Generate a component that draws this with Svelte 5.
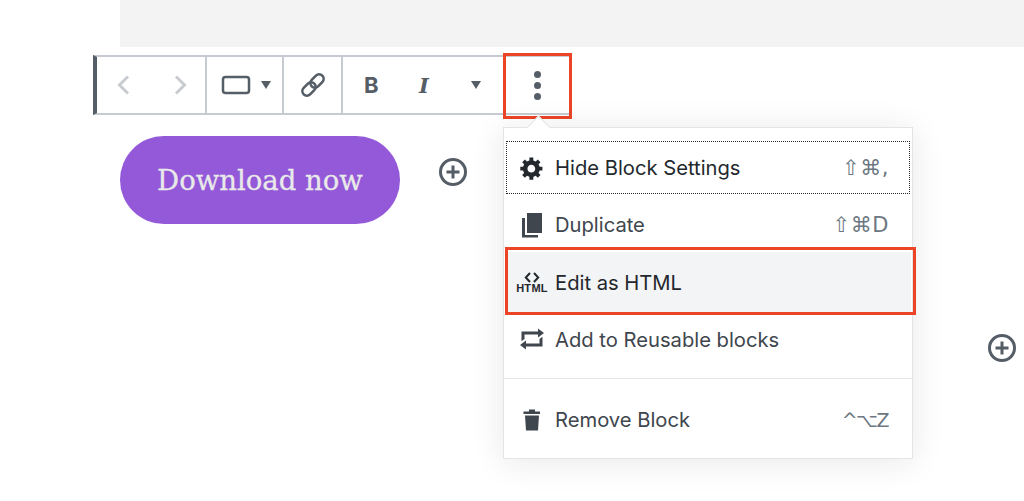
<script>
  const items = [
    { id: 'gear', label: 'Hide Block Settings', keys: '⇧⌘,', cls: 'focus' },
    { id: 'dup', label: 'Duplicate', keys: '⇧⌘D', cls: 'dup' },
    { id: 'html', label: 'Edit as HTML', keys: '', cls: 'active' },
    { id: 'reuse', label: 'Add to Reusable blocks', keys: '', cls: 'reuse' }
  ];
</script>

<div class="page">
  <div class="band"></div>

  <div class="toolbar">
    <div class="group nav">
      <svg width="24" height="24" viewBox="0 0 24 24"><path d="M16 3.500 7.500 12l8.500 8.500" class="off" /></svg>
      <svg width="24" height="24" viewBox="0 0 24 24"><path d="M8 3.500 16.500 12 8 20.500" class="off" /></svg>
    </div>
    <div class="group type">
      <svg width="30" height="22" viewBox="0 0 30 22"><rect x="2" y="3" width="26" height="16" rx="2.500" class="box" /></svg>
      <span class="caret"></span>
    </div>
    <div class="group link">
      <svg width="28" height="28" viewBox="0 0 28 28" class="chain">
        <rect x="2.500" y="13.500" width="15" height="9" rx="4.500" transform="rotate(-45 10 18)" />
        <rect x="10.500" y="5.500" width="15" height="9" rx="4.500" transform="rotate(-45 18 10)" />
      </svg>
    </div>
    <div class="group format">
      <b class="bold">B</b>
      <i class="ital">I</i>
      <span class="caret"></span>
    </div>
    <div class="group more">
      <span class="dots"><i></i><i></i><i></i></span>
    </div>
  </div>

  <div class="row">
    <button class="cta">Download now</button>
    <svg width="30" height="30" viewBox="0 0 30 30" class="plus"><circle cx="15" cy="15" r="12.500" /><path d="M15 8.500v13M8.500 15h13" /></svg>
  </div>

  <svg width="30" height="30" viewBox="0 0 30 30" class="plus plus-far"><circle cx="15" cy="15" r="12.500" /><path d="M15 8.500v13M8.500 15h13" /></svg>

  <div class="redbox red-more"></div>

  <div class="menu">
    <span class="arrow"></span>
    <div class="section">
      {#each items as it}
        <div class="item {it.cls}">
          <span class="ico">
            {#if it.id === 'gear'}
              <svg width="26" height="26" viewBox="0 0 20 20"><path fill="#23282d" d="M18 12h-2.180c-.17.7-.44 1.350-.81 1.930l1.540 1.540-2.100 2.100-1.540-1.540c-.58.360-1.230.640-1.910.810V19H8v-2.180c-.680-.170-1.330-.450-1.910-.810l-1.540 1.540-2.120-2.120 1.540-1.540c-.360-.580-.640-1.230-.810-1.890H1V9h2.180c.170-.700.450-1.330.810-1.910L2.450 5.550l2.100-2.100 1.540 1.540c.580-.370 1.230-.640 1.910-.810V2h3v2.180c.680.170 1.330.440 1.910.810l1.540-1.540 2.120 2.120-1.540 1.540c.360.580.640 1.210.810 1.890H18v3zm-8.500 1.500c1.660 0 3-1.340 3-3s-1.340-3-3-3-3 1.340-3 3 1.340 3 3 3z"/></svg>
            {:else if it.id === 'dup'}
              <svg width="24" height="26" viewBox="0 0 24 26"><path fill="#40464d" d="M7 1h15v20H7z"/><path fill="#40464d" d="M2 6h3v17h13v2.500H2z"/></svg>
            {:else if it.id === 'html'}
              <span class="htmlicon">
                <svg width="16" height="11" viewBox="0 0 16 11"><path d="M6 1 1.800 5.500 6 10M10 1l4.200 4.500L10 10" /></svg>
                <small>HTML</small>
              </span>
            {:else}
              <svg width="30" height="30" viewBox="0 0 20 20"><path fill="#40464d" d="M5 7v3l-2 1.500V5h11V3l4 3.010L14 9V7H5zm10 6v-3l2-1.500V15H6v2l-4-3.010L6 11v2h9z"/></svg>
            {/if}
          </span>
          <span class="label">{it.label}</span>
          {#if it.keys}<span class="keys">{it.keys}</span>{/if}
        </div>
      {/each}
    </div>
    <div class="section last">
      <div class="item plain">
        <span class="ico">
          <svg width="22" height="24" viewBox="0 0 22 24"><path fill="#40464d" d="M8 1.500h6V3.500h5v2.500H2.500V3.500H8zM4 7.500h14l-1 15H5z"/></svg>
        </span>
        <span class="label">Remove Block</span>
        <span class="keys alt">^⌥Z</span>
      </div>
    </div>
    <div class="redbox red-html"></div>
  </div>
</div>

<style>
  :global(body) { margin: 0; background: #fff; }
  .page { position: relative; width: 1024px; height: 501px; overflow: hidden; font-family: Inter, "Liberation Sans", sans-serif; }
  .band { height: 47px; margin-left: 120px; background: #f3f3f4; }

  .toolbar { display: flex; width: 477px; height: 60px; margin: 8px 0 0 93px; box-sizing: border-box; border-left: 4px solid #555d66; border-top: 2px solid #c6cbd1; border-bottom: 2px solid #c6cbd1; background: #fff; }
  .group { display: flex; align-items: center; box-sizing: border-box; border-right: 2px solid #c6cbd1; }
  .nav { width: 110px; padding-left: 15px; gap: 32px; }
  .type { width: 77px; padding-left: 14px; gap: 10px; }
  .link { width: 59px; justify-content: center; }
  .format { width: 161px; padding-left: 21px; border-right: 0; }
  .more { flex: 1; justify-content: center; border-right: 0; }
  .off { fill: none; stroke: #c8ccd0; stroke-width: 3; }
  .box { fill: none; stroke: #555d66; stroke-width: 2.500; }
  .caret { display: block; width: 0; height: 0; border-left: 5px solid transparent; border-right: 5px solid transparent; border-top: 8px solid #555d66; }
  .chain { fill: none; stroke: #555d66; stroke-width: 2.600; }
  .bold { width: 16px; font: 700 22px Inter, sans-serif; color: #555d66; }
  .ital { width: 16px; margin-left: 36px; font: italic 700 21px "DejaVu Serif", serif; color: #555d66; text-align: center; }
  .format .caret { margin-left: 39px; }
  .dots { display: flex; flex-direction: column; gap: 4px; }
  .dots i { display: block; width: 7px; height: 7px; border-radius: 50%; background: #555d66; }

  .row { display: flex; align-items: center; gap: 38px; margin: 21px 0 0 120px; }
  .cta { width: 280px; height: 88px; border: 0; border-radius: 44px; background: #9359d8; color: #e9e9e9; font: 400 27.500px "DejaVu Serif", serif; -webkit-text-stroke: .3px #e9e9e9; padding: 0; }
  .plus { fill: none; stroke: #555d66; }
  .plus circle { stroke-width: 3; }
  .plus path { stroke-width: 3; }
  .row .plus { position: relative; top: -8px; }
  .plus-far { position: absolute; left: 987px; top: 333px; }

  .redbox { position: absolute; box-sizing: border-box; border: 3px solid #ec4427; pointer-events: none; }
  .red-more { left: 503px; top: 53px; width: 69px; height: 66px; }

  .menu { position: absolute; left: 503px; top: 127px; width: 410px; height: 332px; box-sizing: border-box; border: 1px solid #e2e4e7; background: #fff; box-shadow: 0 3px 30px rgba(25, 30, 35, .1); }
  .arrow { position: absolute; left: 26px; top: -9px; width: 16px; height: 16px; background: #fff; border-top: 1px solid #e2e4e7; border-left: 1px solid #e2e4e7; transform: rotate(45deg); }
  .section { position: relative; padding: 13px 2px 0 2px; height: 251px; box-sizing: border-box; border-bottom: 1px solid #e2e4e7; }
  .section.last { height: auto; border: 0; padding-top: 12px; }
  .item { display: flex; align-items: center; height: 57px; box-sizing: border-box; padding: 0 21px 0 14px; color: #40464d; font-size: 20.200px; white-space: nowrap; }
  .item.focus { height: 53px; margin-bottom: 3px; outline: 1px dotted #23282d; outline-offset: -1px; color: #23282d; }
  .item.dup { height: 55px; }
  .item.reuse { height: 54px; }
  .item.active { background: #f3f4f5; height: 60px; margin-right: -1px; color: #23282d; }
  .ico { display: flex; justify-content: center; align-items: center; width: 24px; margin-right: 11px; flex: none; }
  .ico svg { flex: none; }
  .keys { margin-left: auto; color: #6c7781; font: 21px "DejaVu Sans", sans-serif; letter-spacing: .5px; }
  .keys.alt { font-size: 19px; letter-spacing: -1.500px; margin-right: 1px; }
  .htmlicon { display: flex; flex-direction: column; align-items: center; }
  .htmlicon svg { fill: none; stroke: #23282d; stroke-width: 2; }
  .htmlicon small { font: 700 11px/10px "Liberation Sans", sans-serif; color: #23282d; letter-spacing: .3px; }
  .red-html { left: 1px; top: 119px; width: 411px; height: 68px; }
</style>
